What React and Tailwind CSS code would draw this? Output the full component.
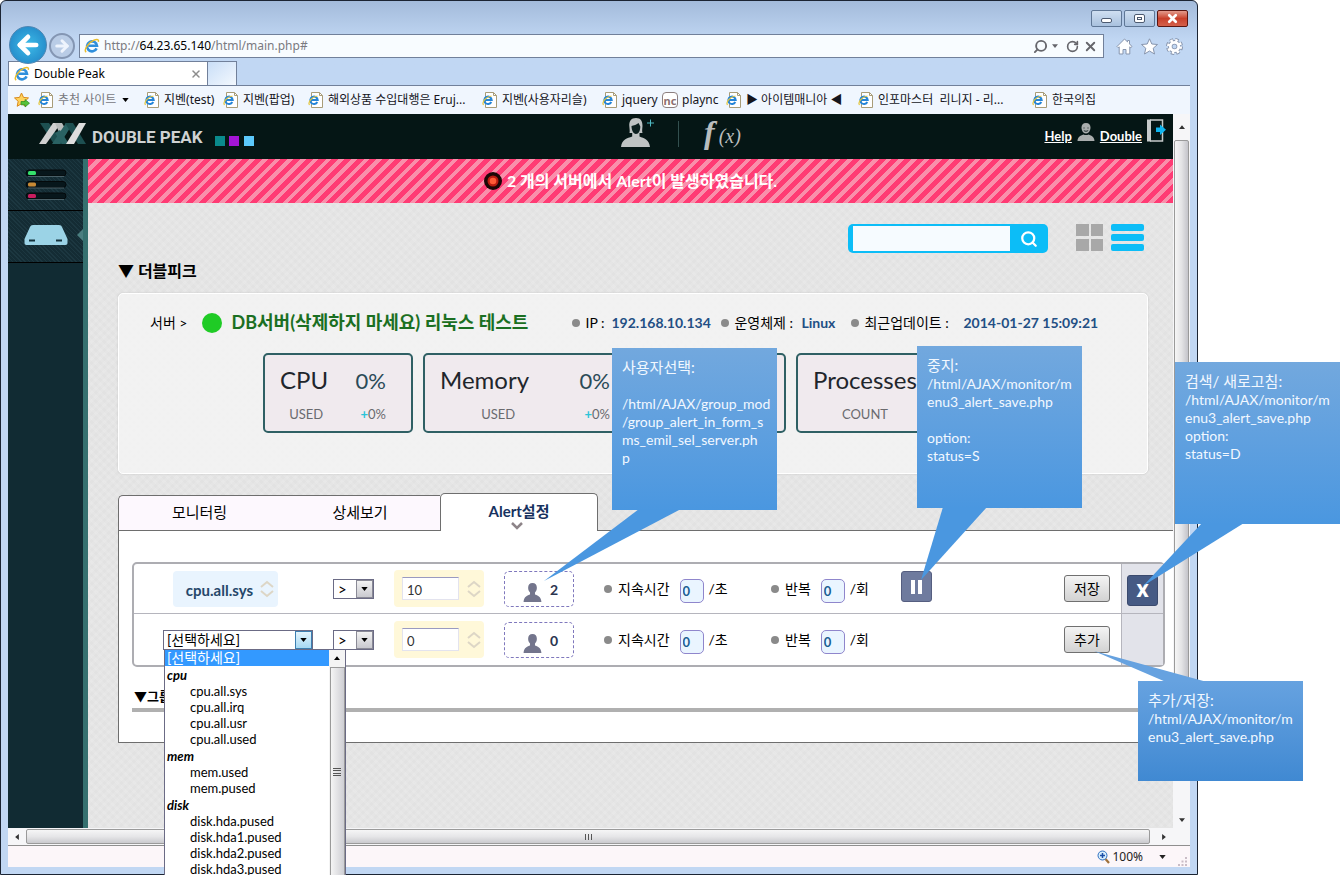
import { useState } from 'react';
import { ArrowLeft, ArrowRight, RotateCw, Search, X } from 'lucide-react';

const BOOKMARKS = [
  { label: '추천 사이트', width: 'w-[106px]', muted: true, menu: true },
  { label: '지벤(test)', width: 'w-[79px]' },
  { label: '지벤(팝업)', width: 'w-[85px]' },
  { label: '해외상품 수입대행은 Eruj...', width: 'w-[174px]' },
  { label: '지벤(사용자리슬)', width: 'w-[120px]' },
  { label: 'jquery', width: 'w-[60px]' },
  { label: 'plaync', width: 'w-[64px]', nc: true },
  { label: '▶ 아이템매니아 ◀', width: 'w-[132px]' },
  { label: '인포마스터\u00a0 리니지 - 리...', width: 'w-[174px]' },
  { label: '한국의집', width: 'w-[80px]' },
];

const METRICS = [
  { name: 'cpu', items: ['cpu.all.sys', 'cpu.all.irq', 'cpu.all.usr', 'cpu.all.used'] },
  { name: 'mem', items: ['mem.used', 'mem.pused'] },
  { name: 'disk', items: ['disk.hda.pused', 'disk.hda1.pused', 'disk.hda2.pused', 'disk.hda3.pused'] },
];

// tail is drawn in the note's own coordinates, so it can leave the box
const NOTES = [
  {
    id: 'user',
    place: 'left-[612px] top-[348px] h-[162px]',
    tail: '27,161 69,161 -68,233',
    title: '사용자선택:',
    lines: ['', '/html/AJAX/group_mod', '/group_alert_in_form_s', 'ms_emil_sel_server.ph', 'p'],
  },
  {
    id: 'pause',
    place: 'left-[917px] top-[346px] h-[162px]',
    tail: '26,161 70,161 4,234',
    title: '중지:',
    lines: ['/html/AJAX/monitor/m', 'enu3_alert_save.php', '', 'option:', 'status=S'],
  },
  {
    id: 'remove',
    place: 'left-[1175px] top-[362px] h-[162px]',
    tail: '27,161 69,161 -32,224',
    title: '검색/ 새로고침:',
    lines: ['/html/AJAX/monitor/m', 'enu3_alert_save.php', 'option:', 'status=D'],
  },
  {
    id: 'save',
    place: 'left-[1138px] top-[681px] h-[100px]',
    tail: '28,1 69,1 -44,-30',
    up: true,
    title: '추가/저장:',
    lines: ['/html/AJAX/monitor/m', 'enu3_alert_save.php'],
  },
];

function IeLogo({ className }) {
  return (
    <svg className={className} viewBox="0 0 16 16" fill="none">
      <path d="M12.6 10.4a5 5 0 1 1 .4-2.6H4.6" stroke="#2f8fdc" strokeWidth="2.6" />
      <path d="M2.2 14.2C-.6 12.2 4 4.600 10 2.100c3.400-1.400 5-.6 4.300 1.800" stroke="#e9bd2c" strokeWidth="1.500" />
    </svg>
  );
}

function PageIcon() {
  return (
    <svg className="h-4 w-4 shrink-0" viewBox="0 0 16 16" fill="none">
      <path d="M3.500 .5h8l3 3v12h-11z" fill="#fff" stroke="#a89c78" />
      <path d="M11.500 .5v3h3" stroke="#a89c78" />
      <path d="M9.300 10a3.700 3.700 0 1 1 .4-2H3.200" stroke="#2484d8" strokeWidth="2" />
      <path d="M1.500 13C-.5 10 4 4.500 9.500 4" stroke="#e6c63a" strokeWidth="1.200" />
    </svg>
  );
}

function NcIcon() {
  return (
    <span className="flex h-4 w-4 shrink-0 items-center justify-center rounded-sm border border-[#8c7f80] bg-white text-[11px] leading-none font-bold text-[#8c6f72]">
      nc
    </span>
  );
}

function Caret({ className }) {
  return (
    <svg className={className} viewBox="0 0 8 5" fill="currentColor">
      <path d="M0 0h8L4 5z" />
    </svg>
  );
}

function PersonIcon({ className }) {
  return (
    <svg className={className} viewBox="0 0 20 20" fill="currentColor">
      <path d="M10 0C7 0 5.400 2 5.400 5c0 2 .8 3.800 2 5v2.200C5 13.200 1 14 .6 20h18.800C19 14 15 13.200 12.600 12.200V10c1.200-1.200 2-3 2-5 0-3-1.600-5-4.600-5z" />
    </svg>
  );
}

function TitleBar() {
  return (
    <div className="flex h-[34px] items-start justify-end gap-[2px] pt-[10px]">
      <button type="button" aria-label="최소화" className="flex h-[17px] w-[31px] items-center justify-center rounded-xs border border-[#5f7796] bg-linear-to-b from-[#cfdff1] to-[#a9c1de]">
        <span className="mt-[3px] h-[5px] w-[11px] rounded-xs border border-[#4c5a70] bg-white" />
      </button>
      <button type="button" aria-label="최대화" className="flex h-[17px] w-[31px] items-center justify-center rounded-xs border border-[#5f7796] bg-linear-to-b from-[#cfdff1] to-[#a9c1de]">
        <span className="flex h-[9px] w-[11px] items-center justify-center rounded-xs border border-[#4c5a70] bg-white">
          <span className="h-[3px] w-[5px] border border-[#4c5a70]" />
        </span>
      </button>
      <button type="button" aria-label="닫기" className="mr-[2px] flex h-[17px] w-[31px] items-center justify-center rounded-xs border border-[#5a1510] bg-linear-to-b from-[#e29a8c] via-[#c9402b] to-[#d4604a] text-white">
        <X size={13} strokeWidth={5} />
      </button>
    </div>
  );
}

function AddressBar() {
  return (
    <div className="flex h-[27px] items-start">
      <div className="relative flex w-[71px] shrink-0">
        <button type="button" aria-label="뒤로" className="absolute top-[-8px] left-[1px] flex h-[38px] w-[38px] items-center justify-center rounded-full border border-[#4d86b3] bg-radial from-[#3dbbe8] to-[#1f7fc2] text-white">
          <ArrowLeft size={28} strokeWidth={4} />
        </button>
        <button type="button" aria-label="앞으로" className="absolute top-[-1px] left-[41px] flex h-[26px] w-[26px] items-center justify-center rounded-full border-2 border-[#8496b3] bg-[#b9cce6] text-[#eef4fd]">
          <ArrowRight size={18} strokeWidth={4} />
        </button>
      </div>
      <div className="flex h-6 flex-1 items-center border border-[#71809a] bg-[#f8fcff] pr-[5px] pl-1 text-[12px] text-[#7a7a80]">
        <IeLogo className="mr-1 h-4 w-4" />
        <div className="flex-1">
          http://<span className="text-black">64.23.65.140</span>/html/main.php#
        </div>
        <Search size={15} strokeWidth={3} className="mr-1 -scale-x-100 text-[#66666c]" />
        <Caret className="mr-2 h-1 w-[6px] text-[#66666c]" />
        <RotateCw size={13} strokeWidth={3} className="mr-1 text-[#66666c]" />
        <X size={15} strokeWidth={3} className="text-[#66666c]" />
      </div>
      <div className="flex h-6 w-[86px] items-center justify-end gap-2 pr-[7px]">
        <svg className="h-[17px] w-[17px]" viewBox="0 0 17 17" fill="#fff" stroke="#8795ad">
          <path d="M8.500 1 1 8.500l1.200 1.200 1-.9V16h3.800v-4.500h3V16h3.800V8.800l1 .9L16 8.500l-2.500-2.600V2.500h-2v1.400z" />
        </svg>
        <svg className="h-[17px] w-[17px]" viewBox="0 0 17 17" fill="#fff" stroke="#8795ad">
          <path d="m8.500.8 2.300 5.200 5.700.5-4.300 3.800 1.300 5.700-5-3-5 3 1.300-5.700L.5 6.500 6.200 6z" />
        </svg>
        <svg className="h-[17px] w-[17px]" viewBox="0 0 17 17" fill="none">
          <circle cx="8.500" cy="8.500" r="6.500" stroke="#8795ad" strokeWidth="4" strokeDasharray="3.100 2" />
          <circle cx="8.500" cy="8.500" r="4.300" stroke="#8795ad" strokeWidth="4.500" />
          <circle cx="8.500" cy="8.500" r="6.200" stroke="#fff" strokeWidth="2.600" strokeDasharray="2.400 2.470" />
          <circle cx="8.500" cy="8.500" r="4.200" stroke="#fff" strokeWidth="2.800" />
        </svg>
      </div>
    </div>
  );
}

function BrowserTabs() {
  return (
    <div className="flex h-6">
      <div className="flex h-6 w-[200px] items-center border border-b-0 border-[#71809a] bg-white pr-[5px] pl-[5px] text-[12px] text-black">
        <IeLogo className="mr-1 h-4 w-4" />
        <span className="flex-1">Double Peak</span>
        <X size={12} strokeWidth={3} className="text-[#8d8d8d]" />
      </div>
      <div className="h-6 w-[29px] border border-b-0 border-l-0 border-[#71809a] bg-linear-to-br from-[#c9def7] to-[#f3f8fe]" />
    </div>
  );
}

function Bookmarks() {
  return (
    <nav className="flex h-[29px] items-center overflow-hidden border-t border-[#71809a] bg-[#f0f6fe] pl-[6px] text-[12px] text-[#15151c]">
      <svg className="mr-[8px] h-4 w-4 shrink-0" viewBox="0 0 16 16">
        <path d="m7.500 1 2 4.400 5 .5-3.700 3.400 1 5-4.300-2.600-4.300 2.600 1-5L.5 5.900l5-.5z" fill="#ffd35c" stroke="#d98a1d" />
        <path d="M7 9.500h4V7.500l4.500 3.700L11 15v-2.200H7z" fill="#55c23a" stroke="#2d8a1f" strokeWidth=".7" />
      </svg>
      {BOOKMARKS.map((b) => (
        <a
          key={b.label}
          href="#"
          className={`flex shrink-0 items-center gap-1 whitespace-nowrap ${b.width} ${b.muted ? 'text-[#77777d]' : ''}`}
        >
          {b.nc ? <NcIcon /> : <PageIcon />}
          <span>{b.label}</span>
          {b.menu && <Caret className="ml-[2px] h-1 w-[7px] text-black" />}
        </a>
      ))}
    </nav>
  );
}

function AppHeader() {
  return (
    <header className="flex h-[45px] bg-[#051615] text-[14px]">
      <div className="flex w-[613px] shrink-0 items-start pt-[9px] pl-[31px]">
        <svg className="mr-[6px] h-[22px] w-[47px]" viewBox="0 0 47 22">
          <path d="M1 0h9l14 21h-9z" fill="#1d4f50" />
          <path d="M0 21 14 0h8L7 21z" fill="#d0d0d0" />
          <path d="M16 0h7l5 9-5 7z" fill="#b9bcbc" />
          <path d="M13 21 27 0h7L21 21z" fill="#2a6263" />
          <path d="M26 0h8l13 21h-8z" fill="#1d4f50" />
          <path d="M16 10 23 21h7L21 7z" fill="#2a6263" />
          <path d="M27 21 40 0h7L35 21z" fill="#dedede" />
        </svg>
        <span className="pt-1 font-[Roboto] text-[17px] leading-[20px] font-bold text-[#cfd2d2]">DOUBLE PEAK</span>
        <span className="mt-[13px] ml-3 h-[10px] w-[10px] bg-[#0a8a8c]" />
        <span className="mt-[13px] ml-1 h-[10px] w-[10px] bg-[#a315d6]" />
        <span className="mt-[13px] ml-[5px] h-[10px] w-[10px] bg-[#5cc9fb]" />
      </div>
      <div className="flex items-start pt-1">
        <svg className="h-[29px] w-[36px] overflow-visible" viewBox="0 0 36 29">
          <path d="M15 0C10 0 8 3.500 8.300 8c.2 3 .7 5 .2 7h2.700v3.500C6 20.500 1 21 0 29h29c-1-8-6-8.500-10.500-10.500V15h3c-.7-2-.2-4 0-7C21.500 3.500 20 0 15 0z" fill="#bfc3c3" />
          <path d="M10.500 8c2-.4 5.500-1.400 7-3 .8 1.500 1.500 2.500 1.800 3.500 0 4-1.500 7.500-4.300 7.500s-4.500-4-4.500-8z" fill="#0c1f1e" />
          <path d="M26 5h7M29.500 1.500v7" stroke="#4fb8c2" />
        </svg>
        <span className="mt-[3px] mr-[25px] ml-[21px] h-[26px] w-px bg-[#33504f]" />
        <span className="font-['Liberation_Serif'] text-[32px] leading-[28px] font-bold text-[#b9bdbd] italic">
          f<span className="ml-1 text-[20px] font-normal">(x)</span>
        </span>
      </div>
      <div className="ml-auto flex items-start gap-[5px] pt-[5px] pr-[7px] text-[13px] font-bold text-white">
        <a href="#" className="mt-[7px] leading-5 underline">Help</a>
        <svg className="mt-1 h-[18px] w-[18px]" viewBox="0 0 18 18" fill="#a9adad">
          <path d="M9 0C6 0 4.500 2 4.500 4.500S6 10.500 9 10.500s4.500-3.500 4.500-6S12 0 9 0zM.5 18c.3-4 2.500-5.500 6-6.500 1.500.8 3.500.8 5 0 3.500 1 5.700 2.500 6 6.500z" />
          <path d="M7 4.500v1M11 4.500v1M6.800 7.500c1.300 1 3 1 4.400 0" fill="none" stroke="#1c2b2b" />
        </svg>
        <a href="#" className="mt-[7px] leading-5 underline">Double</a>
        <a href="#" aria-label="로그아웃">
          <svg className="h-[23px] w-[19px]" viewBox="0 0 19 23">
            <path d="M0 .5h4v22H0z" fill="#c6caca" />
            <path d="M3 1h12.500v21H3" fill="none" stroke="#c6caca" strokeWidth="1.500" />
            <path d="M9 8.500h4V5.500l6 5.200-6 5.200v-3H9z" fill="#0fb5ef" />
          </svg>
        </a>
      </div>
    </header>
  );
}

function Sidebar() {
  return (
    <aside className="w-20 shrink-0 border-r-[5px] border-[#35706f] bg-[#112b33]">
      <a href="#" aria-label="서버 목록" className="flex h-[52px] items-center justify-center border-b border-black bg-[repeating-linear-gradient(45deg,#1c3740_0px,#1c3740_1px,#142c34_1px,#142c34_3px)]">
        <svg className="h-[32px] w-[42px]" viewBox="0 0 42 32" fill="none">
          {['#35e06b', '#c98a35', '#c81d5f'].map((color, i) => (
            <g key={color} transform={`translate(0 ${i * 11.5})`}>
              <rect x="1" y="1" width="40" height="6" rx="3" fill="#07161b" stroke="#04090b" />
              <path d="M3 7.500h36" stroke="#4a6068" />
              <rect x="3" y="2" width="8" height="4" rx="1.500" fill={color} />
            </g>
          ))}
        </svg>
      </a>
      <a href="#" aria-label="장비" className="flex h-[52px] items-center border-b border-black bg-[repeating-linear-gradient(45deg,#1c3740_0px,#1c3740_1px,#142c34_1px,#142c34_3px)] pb-1 pl-4">
        <svg className="h-[20px] w-[44px] shrink-0" viewBox="0 0 44 20">
          <path d="M9 0h26c1.500 0 2.500.8 3 2l5.500 12v4c0 1.200-.8 2-2 2h-39c-1.200 0-2-.8-2-2v-4L6 2c.5-1.200 1.500-2 3-2z" fill="#9bd3e6" />
          <path d="M5 15.500h6M32 15.500h6" stroke="#12303a" strokeWidth="2" />
        </svg>
        <svg className="ml-auto h-3 w-[6px]" viewBox="0 0 6 12">
          <path d="M6 0v12L0 6z" fill="#4a7e80" />
        </svg>
      </a>
    </aside>
  );
}

function SearchRow() {
  return (
    <div className="flex h-[29px] justify-end pr-[29px]">
      <form className="flex h-[29px] w-[200px] rounded-[5px] bg-[#0cbdf7] py-[2px] pl-[5px]" onSubmit={(e) => e.preventDefault()}>
        <input aria-label="검색" className="w-[157px] bg-[#f6fbff] px-1" />
        <button type="submit" aria-label="검색" className="flex flex-1 items-center justify-center text-white">
          <Search size={18} strokeWidth={3} />
        </button>
      </form>
      <button type="button" aria-label="격자 보기" className="ml-7 grid h-[27px] w-[27px] grid-cols-2 gap-[2px]">
        {[0, 1, 2, 3].map((i) => (
          <span key={i} className="h-3 bg-[#a8a8a8]" />
        ))}
      </button>
      <button type="button" aria-label="목록 보기" className="ml-2 flex h-[27px] w-[33px] flex-col justify-between">
        {[0, 1, 2].map((i) => (
          <span key={i} className="h-[7px] w-full rounded-[2px] bg-[#0cbdf7]" />
        ))}
      </button>
    </div>
  );
}

function StatCard({ title, value, label, delta, width, inner }) {
  return (
    <div className={`h-20 rounded-[5px] border-2 border-[#2f6064] bg-[#f0eaee] px-[15px] ${width}`}>
      <div className={inner}>
        <div className="flex h-[50px] items-center justify-between text-[24px] text-[#1f262c]">
          <span>{title}</span>
          <span className="text-[22px] text-[#2b4a57]">{value}</span>
        </div>
        <div className="flex justify-between text-[13px] leading-[18px] text-[#6a6a6e]">
          <span className="flex-1 pr-7 text-center">{label}</span>
          <span>
            {delta && <span className="font-bold text-[#2cc4d8]">+</span>}
            {delta}
          </span>
        </div>
      </div>
    </div>
  );
}

function Dot() {
  return <span className="h-2 w-2 shrink-0 rounded-full bg-[#8a8a8a]" />;
}

function ServerPanel() {
  return (
    <section className="mr-[25px] h-[181px] rounded-[5px] border border-white bg-[#f3f3f3]/90 shadow-[0_0_2px_rgba(0,0,0,0.15)]">
      <div className="flex h-[59px] items-center pb-[2px] pl-[31px] text-[14px] whitespace-nowrap text-black">
        <span>서버 &gt;</span>
        <span className="mr-[9px] ml-[15px] h-5 w-5 rounded-full bg-[#1fcb25]" />
        <h2 className="w-[341px] text-[18px] font-bold text-[#1b6f22]">DB서버(삭제하지 마세요) 리눅스 테스트</h2>
        <Dot />
        <span className="ml-[5px] w-[26px]">IP :</span>
        <b className="w-[110px] text-[#234f84]">192.168.10.134</b>
        <Dot />
        <span className="ml-[5px] w-[67px]">운영체제 :</span>
        <b className="w-[50px] text-[#234f84]">Linux</b>
        <Dot />
        <span className="ml-[5px] w-[99px]">최근업데이트 :</span>
        <b className="text-[#234f84]">2014-01-27 15:09:21</b>
      </div>
      <div className="flex gap-[10px] pl-36">
        <StatCard title="CPU" value="0%" label="USED" delta="0%" width="w-[150px]" inner="w-[106px]" />
        <StatCard title="Memory" value="0%" label="USED" delta="0%" width="w-[363px]" inner="w-[170px]" />
        <StatCard title="Processes" value="" label="COUNT" delta="" width="w-[200px]" inner="w-[132px]" />
      </div>
    </section>
  );
}

function Spinner() {
  return (
    <svg className="h-[18px] w-[14px] text-[#ddd6c6]" viewBox="0 0 14 18" fill="none" stroke="currentColor" strokeWidth="2">
      <path d="m1 7 6-5 6 5M1 11l6 5 6-5" />
    </svg>
  );
}

function OperatorSelect({ id }) {
  return (
    <div className="relative h-5 w-[41px]">
      <label htmlFor={id} className="sr-only">비교 연산자</label>
      <select id={id} className="block h-5 w-full appearance-none border border-[#6b6b85] bg-white pl-1 text-[15px] leading-[18px] text-black">
        <option>&gt;</option>
        <option>&lt;</option>
      </select>
      <span className="pointer-events-none absolute top-px right-px flex h-[18px] w-[17px] items-center justify-center border border-[#8a8a96] bg-linear-to-b from-[#f2f2f2] to-[#c9c9cf] text-black">
        <Caret className="h-1 w-[7px]" />
      </span>
    </div>
  );
}

function MetricDropdown() {
  return (
    <div className="absolute top-[19px] left-px z-20 flex h-[240px] w-[182px] border border-[#6b6b85] bg-white text-[13px] leading-4 text-black">
      <ul role="listbox" aria-label="항목" className="flex-1">
        <li role="option" aria-selected="true" className="h-4 bg-[#3399ff] pl-[2px] text-[14px] text-white">[선택하세요]</li>
        {METRICS.map((group) => (
          <li key={group.name} className="pt-px">
            <div className="pl-[2px] font-bold italic">{group.name}</div>
            <ul>
              {group.items.map((item) => (
                <li key={item} role="option" aria-selected="false" className="pl-[25px]">{item}</li>
              ))}
            </ul>
          </li>
        ))}
      </ul>
      <div className="flex w-4 flex-col items-center bg-[#f4f4f4]">
        <span className="flex h-[17px] items-center">
          <Caret className="h-1 w-[6px] rotate-180" />
        </span>
        <div className="flex w-[15px] flex-1 justify-center border border-[#9a9a9a] bg-linear-to-r from-[#f5f5f5] to-[#cfcfd4] pt-[100px]">
          <span className="flex h-[9px] w-2 flex-col justify-between">
            <span className="h-px bg-[#555]" />
            <span className="h-px bg-[#555]" />
            <span className="h-px bg-[#555]" />
            <span className="h-px bg-[#555]" />
          </span>
        </div>
      </div>
    </div>
  );
}

function MetricSelect() {
  return (
    <div className="relative ml-[29px] h-5 w-[150px]">
      <label htmlFor="metric" className="sr-only">항목 선택</label>
      <select id="metric" className="block h-5 w-full appearance-none border border-[#6b6b85] bg-white pl-[3px] text-[14px] leading-[18px] text-black">
        <option>[선택하세요]</option>
        {METRICS.map((g) => (
          <optgroup key={g.name} label={g.name}>
            {g.items.map((item) => (
              <option key={item}>{item}</option>
            ))}
          </optgroup>
        ))}
      </select>
      <span className="pointer-events-none absolute top-px right-px flex h-[18px] w-[17px] items-center justify-center border border-[#3c7fb1] bg-linear-to-b from-[#e3f4fc] to-[#a6d9f4] text-black">
        <Caret className="h-1 w-[7px]" />
      </span>
      <MetricDropdown />
    </div>
  );
}

function CountField({ id, label, unit }) {
  return (
    <div className="flex h-6 items-center text-[14px] text-black">
      <Dot />
      <label htmlFor={id} className="ml-[6px]">{label}</label>
      <input id={id} defaultValue="0" className="mt-1 mr-[5px] ml-[10px] h-6 w-6 rounded-[5px] border border-[#8f86cc] bg-[#eaf5ff] pl-[2px] text-[13px] font-bold text-[#1c5f93]" />
      <span>{unit}</span>
    </div>
  );
}

function AlertRow({ id, metric, threshold, users, paused, action, last }) {
  const [value, setValue] = useState(threshold);
  return (
    <div className={`flex ${last ? 'h-[51px]' : 'h-[50px] border-b border-[#b5b5bd]'}`}>
      <div className="grid flex-1 grid-cols-[199px_61px_110px_100px_167px_130px_1fr_auto] items-center border-r border-[#b5b5bd] pr-[11px]">
        {metric ? (
          <div className="ml-[39px] flex h-9 w-[105px] items-center justify-end rounded bg-[#e9f4fe] pr-1 text-[15px] font-bold text-[#25476a]">
            <span className="pt-1">{metric}</span>
            <span className="ml-[7px]"><Spinner /></span>
          </div>
        ) : (
          <MetricSelect />
        )}
        <OperatorSelect id={`${id}-op`} />
        <div className="flex h-[37px] w-[90px] items-center rounded bg-[#fff8d9] pl-2">
          <input
            aria-label="임계값"
            value={value}
            onChange={(e) => setValue(e.target.value)}
            className="h-[23px] w-[57px] border border-[#e3e3ee] border-t-[#9a9ac0] bg-white px-1 pt-[3px] text-[13px] text-[#333]"
          />
          <span className="ml-2"><Spinner /></span>
        </div>
        <button type="button" aria-label="사용자선택" className="flex h-9 w-[70px] items-center rounded-[5px] border border-dashed border-[#7f78bd] bg-white pl-[18px] text-[14px] font-bold text-[#2b3550]">
          <PersonIcon className="mt-2 h-[19px] w-[19px] text-[#73758c]" />
          <span className="ml-2 pt-px">{users}</span>
        </button>
        <CountField id={`${id}-duration`} label="지속시간" unit="/초" />
        <CountField id={`${id}-repeat`} label="반복" unit="/회" />
        <div className="pb-1">
          {paused && (
            <button type="button" aria-label="중지" className="flex h-[31px] w-[31px] items-center justify-center gap-[3px] rounded-[3px] border border-[#555e80] bg-[#6f7b9e]">
              <span className="h-[14px] w-1 bg-white" />
              <span className="h-[14px] w-1 bg-white" />
            </button>
          )}
        </div>
        <button type="button" className="h-[27px] w-[46px] rounded-[3px] border border-[#707070] bg-linear-to-b from-[#f4f4f4] to-[#d2d2d2] text-[14px] leading-none text-black">
          {action}
        </button>
      </div>
      <div className="flex w-[41px] items-center justify-center bg-[#e2e3ea]">
        {metric && (
          <button type="button" aria-label="삭제" className="mt-1 h-[31px] w-[31px] rounded-[3px] border border-[#3b4a6e] bg-[#465a84] font-['Roboto'] text-[19px] leading-none font-black text-white">
            X
          </button>
        )}
      </div>
    </div>
  );
}

function AlertSettings() {
  return (
    <section className="mt-[19px]">
      <div className="flex h-[38px] items-end text-[15px] text-black">
        <div className="flex h-9 w-[322px] rounded-tl-[5px] border border-r-0 border-[#6e6e6e] bg-[#fdf8fe]">
          <button type="button" className="w-[161px] pb-[2px]">모니터링</button>
          <button type="button" className="w-[160px] pb-[2px]">상세보기</button>
        </div>
        <button type="button" className="flex h-[38px] w-[158px] flex-col items-center rounded-t-[5px] border border-b-0 border-[#6e6e6e] bg-white pt-[7px] leading-5 font-bold text-[#17325f]">
          Alert설정
          <svg className="mt-px mr-1 h-2 w-3" viewBox="0 0 12 8" fill="none">
            <path d="m1 1 5 5 5-5" stroke="#8d8488" strokeWidth="2.500" />
          </svg>
        </button>
        <div className="flex-1 self-stretch border-b border-[#6e6e6e]" />
      </div>
      <div className="h-[212px] border-b border-l border-[#6e6e6e] bg-white pt-[31px] pr-2 pl-[13px]">
        <div className="rounded-[5px] border-2 border-[#adadb2]">
          <AlertRow id="saved" metric="cpu.all.sys" threshold="10" users="2" paused action="저장" />
          <AlertRow id="draft" threshold="0" users="0" action="추가" last />
        </div>
        <h3 className="mt-[17px] box-content h-6 border-b-4 border-[#b0b0b0] pl-[2px] text-[13px] leading-6 font-bold text-black">▼그룹</h3>
      </div>
    </section>
  );
}

function MonitorPage() {
  return (
    <div className="flex min-w-0 flex-1 flex-col">
      <AppHeader />
      <div className="flex flex-1">
        <Sidebar />
        <main className="min-w-0 flex-1 bg-[#e2e2e2] bg-[repeating-linear-gradient(45deg,transparent_0px,transparent_3px,rgba(255,255,255,0.1)_3px,rgba(255,255,255,0.1)_6px),repeating-linear-gradient(-45deg,transparent_0px,transparent_3px,rgba(255,255,255,0.1)_3px,rgba(255,255,255,0.1)_6px)]">
          <div className="flex h-11 items-center justify-center bg-[repeating-linear-gradient(-45deg,#ff3b74_0px,#ff3b74_5px,#f98fab_5px,#f98fab_9px)] text-[16px] font-bold text-white">
            <svg className="mr-[5px] h-[18px] w-[18px]" viewBox="0 0 18 18">
              <circle cx="9" cy="9" r="9" fill="#1c0707" />
              <circle cx="9" cy="9" r="5.500" fill="#b91c10" />
              <circle cx="9" cy="9" r="3.300" fill="#ff5a36" />
            </svg>
            2 개의 서버에서 Alert이 발생하였습니다.
          </div>
          <div className="pt-[21px] pl-[30px]">
            <SearchRow />
            <h1 className="mt-2 mb-[12px] text-[16px] leading-5 font-bold text-black">▼ 더블피크</h1>
            <ServerPanel />
            <AlertSettings />
          </div>
        </main>
      </div>
    </div>
  );
}

function VerticalScrollbar() {
  return (
    <div className="flex w-[17px] flex-col items-center justify-between bg-[#f6f6f8] text-[#333]">
      <span className="flex h-[26px] items-center">
        <Caret className="h-1 w-[6px] rotate-180" />
      </span>
      <div className="mb-16 w-[15px] flex-1 rounded-xs border border-[#9a9a9a] bg-linear-to-r from-[#f6f6f6] via-[#e4e4e6] to-[#c4c4ca]" />
      <span className="flex h-4 items-center">
        <Caret className="h-1 w-[6px]" />
      </span>
    </div>
  );
}

function HorizontalScrollbar() {
  return (
    <div className="flex h-[18px] items-center border-b border-[#8f8f8f] bg-[#f6f6f8] text-[#333]">
      <span className="flex w-[18px] justify-center">
        <Caret className="h-1 w-[6px] rotate-90" />
      </span>
      <div className="flex h-[15px] flex-1 items-center justify-center gap-[2px] rounded-xs border border-[#9a9a9a] bg-linear-to-b from-[#f6f6f6] via-[#e6e6e8] to-[#cacace]">
        <span className="h-[6px] w-px bg-[#555]" />
        <span className="h-[6px] w-px bg-[#555]" />
        <span className="h-[6px] w-px bg-[#555]" />
      </div>
      <span className="mr-[12px] flex w-7 justify-center">
        <Caret className="h-1 w-[6px] -rotate-90" />
      </span>
    </div>
  );
}

function StatusBar() {
  return (
    <footer className="flex h-[21px] items-center justify-end bg-[#fcf6f9] font-['Noto_Sans',sans-serif] text-[12px] text-[#222]">
      <svg className="mr-[2px] h-[14px] w-[13px]" viewBox="0 0 13 14" fill="none">
        <path d="m8.500 9 3.500 4" stroke="#a0713b" strokeWidth="2.200" />
        <circle cx="5.500" cy="5.500" r="4.500" fill="#d7edfc" stroke="#2f6fc0" />
        <path d="M5.500 3v5M3 5.500h5" stroke="#1d4fa8" strokeWidth="1.500" />
      </svg>
      <span>100%</span>
      <Caret className="mr-3 ml-4 h-1 w-[7px]" />
      <svg className="mr-[2px] h-[10px] w-[10px] self-end" viewBox="0 0 10 10" fill="#c9bcc6">
        <path d="M7 0h2v2H7zM7 3.500h2v2H7zM3.500 3.500h2v2h-2zM7 7h2v2H7zM3.500 7h2v2h-2zM0 7h2v2H0z" />
      </svg>
    </footer>
  );
}

function Note({ note }) {
  return (
    <aside
      className={`absolute z-30 w-[165px] pt-[9px] pl-[10px] text-[14px] leading-[18px] whitespace-nowrap text-[#f2f8ff] ${note.place} ${
        note.up ? 'bg-linear-to-b from-[#66a2e0] to-[#4089d2]' : 'bg-linear-to-b from-[#72a8de] to-[#4a97e0]'
      }`}
    >
      <svg className="pointer-events-none absolute top-0 left-0 h-full w-full overflow-visible">
        <polygon points={note.tail} fill={note.up ? '#66a2e0' : '#4a97e0'} />
      </svg>
      <p className="h-5 text-[15px] leading-5">{note.title}</p>
      {note.lines.map((line, i) => (
        <p key={i} className="h-[18px]">{line}</p>
      ))}
    </aside>
  );
}

export default function App() {
  return (
    <div className="relative h-screen overflow-hidden bg-white font-[Lato,'Noto_Sans_CJK_KR',sans-serif]">
      <div className="mr-[142px] flex h-screen flex-col rounded-t-md border border-[#1b2433] bg-[#bdd5f3] bg-linear-to-b from-[#a3bbdb] to-[#c1d7f3] to-[40px] pr-[7px] pb-[7px] pl-[7px]">
        <div className="-mt-px font-['Noto_Sans','Noto_Sans_CJK_KR',sans-serif]">
          <TitleBar />
          <AddressBar />
          <BrowserTabs />
          <Bookmarks />
        </div>
        <div className="flex min-h-0 flex-1">
          <MonitorPage />
          <VerticalScrollbar />
        </div>
        <HorizontalScrollbar />
        <StatusBar />
      </div>
      {NOTES.map((note) => (
        <Note key={note.id} note={note} />
      ))}
    </div>
  );
}
